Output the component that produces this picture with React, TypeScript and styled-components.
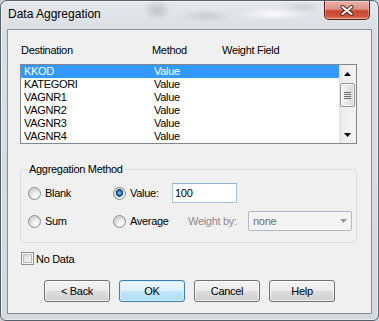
import React from "react";
import styled, { createGlobalStyle, css } from "styled-components";

const GlobalStyle = createGlobalStyle`
  html, body { margin: 0; padding: 0; width: 379px; height: 321px; overflow: hidden; background: #c9ced3; }
  #root { width: 379px; height: 321px; }
  * { box-sizing: border-box; }
`;

const Window = styled.div`
  width: 379px;
  height: 321px;
  border: 1px solid #56606a;
  border-radius: 7px 7px 6px 6px;
  padding: 0 6px 6px;
  display: flex;
  flex-direction: column;
  background:
    radial-gradient(ellipse 20px 15px at 156px 9px, rgba(110, 115, 120, 0.3), transparent 70%),
    radial-gradient(ellipse 38px 9px at 205px 15px, rgba(130, 135, 140, 0.25), transparent 70%),
    radial-gradient(ellipse 50px 9px at 272px 13px, rgba(255, 255, 255, 0.85), transparent 70%),
    radial-gradient(ellipse 28px 9px at 302px 6px, rgba(140, 145, 150, 0.25), transparent 70%),
    linear-gradient(180deg, #e4e8ec 0px, #dadfe4 30px, #d4d9de 100%);
  box-shadow: inset 0 0 0 1px rgba(255, 255, 255, 0.55);
  font-family: "Liberation Sans", Arial, sans-serif;
  overflow: hidden;
`;

const TitleBar = styled.div`
  height: 28px;
  display: flex;
  align-items: flex-start;
  flex-shrink: 0;
`;

const Title = styled.div`
  margin: 6px 0 0 1px;
  font-size: 12px;
  line-height: 15px;
  color: #000;
`;

const CloseButton = styled.div`
  width: 46px;
  height: 19px;
  margin-left: auto;
  margin-right: 2px;
  border: 1px solid #5a1f16;
  border-top: none;
  border-radius: 0 0 5px 5px;
  background: linear-gradient(180deg, #ebb3a7 0%, #dc9283 45%, #c8472f 55%, #cf5539 85%, #e0906f 100%);
  box-shadow: inset 0 0 0 1px rgba(255, 255, 255, 0.3);
  display: flex;
  align-items: center;
  justify-content: center;
`;

const Client = styled.div`
  flex: 1;
  background: #f0f0f0;
  border: 1px solid #858f99;
  padding: 0 12px;
  display: flex;
  flex-direction: column;
  font-size: 11px;
  letter-spacing: -0.3px;
  color: #000;
`;

const HeaderRow = styled.div`
  margin-top: 14px;
  height: 13px;
  line-height: 13px;
  padding-left: 1px;
  display: grid;
  grid-template-columns: 131px 70px 1fr;
`;

const ListBox = styled.div`
  margin-top: 7px;
  width: 337px;
  height: 80px;
  border: 1px solid #828790;
  background: #fff;
  display: flex;
`;

const Rows = styled.div`
  width: 318px;
  display: flex;
  flex-direction: column;
`;

const Row = styled.div<{ $selected?: boolean }>`
  height: 13px;
  line-height: 13px;
  display: grid;
  grid-template-columns: 130px 1fr;
  padding-left: 3px;
  ${(p) =>
    p.$selected &&
    css`
      background: #3399ff;
      color: #fff;
    `}
`;

const ScrollBar = styled.div`
  width: 17px;
  display: flex;
  flex-direction: column;
  background: linear-gradient(90deg, #e3e3e3 0%, #eeeeee 25%, #f3f3f3 100%);
`;

const ArrowButton = styled.div`
  height: 17px;
  display: flex;
  align-items: center;
  justify-content: center;
  flex-shrink: 0;
`;

const Thumb = styled.div`
  margin: 1px 1px 0;
  height: 24px;
  border: 1px solid #979797;
  border-radius: 2px;
  background: linear-gradient(90deg, #f6f6f6 0%, #e8e8e8 50%, #d6d6d6 100%);
  box-shadow: inset 0 0 0 1px rgba(255, 255, 255, 0.8);
  display: flex;
  align-items: center;
  justify-content: center;
`;

const Grip = styled.div`
  width: 7px;
  height: 7px;
  background: repeating-linear-gradient(180deg, #707070 0 1px, transparent 1px 2px);
`;

const Spacer = styled.div`
  flex: 1;
`;

const GroupBox = styled.fieldset`
  margin: 19px 0 0;
  padding: 0;
  width: 337px;
  min-width: 0;
  border: 1px solid #d5dfe5;
  border-radius: 3px;
`;

const Legend = styled.legend`
  margin-left: 6px;
  padding: 0 2px;
  line-height: 13px;
  font-size: 11px;
`;

const GroupBody = styled.div`
  padding: 7px 0 11px 7px;
  display: flex;
  flex-direction: column;
  gap: 8px;
`;

const OptionRow = styled.div`
  display: flex;
  align-items: center;
  height: 20px;
`;

const Radio = styled.label<{ $w: number }>`
  display: flex;
  align-items: center;
  width: ${(p) => p.$w}px;
  height: 20px;
  flex-shrink: 0;
`;

const RadioCircle = styled.span<{ $checked?: boolean }>`
  width: 13px;
  height: 13px;
  border-radius: 50%;
  border: 1px solid #8c8e90;
  margin-right: 4px;
  flex-shrink: 0;
  background: ${(p) =>
    p.$checked
      ? "radial-gradient(circle at 50% 45%, #a8dcfa 0, #3a86c8 1.5px, #1c4f86 3px, #16406f 3.6px, transparent 4px), radial-gradient(circle at 65% 70%, #ffffff 0, #f2f2f2 3px, #d6d6d6 6.5px)"
      : "radial-gradient(circle at 65% 70%, #ffffff 0, #f2f2f2 3px, #d6d6d6 6.5px)"};
`;

const TextInput = styled.input`
  width: 65px;
  height: 20px;
  border: 1px solid #a9c4da;
  border-top-color: #8fb2cd;
  background: #fff;
  padding: 0 2px;
  margin: 0;
  font: inherit;
  letter-spacing: inherit;
  line-height: 18px;
  color: #000;
  outline: none;
`;

const DisabledLabel = styled.span<{ $w: number }>`
  width: ${(p) => p.$w}px;
  color: #8d8d8d;
  flex-shrink: 0;
`;

const Select = styled.div`
  width: 104px;
  height: 20px;
  border: 1px solid #b6babe;
  border-radius: 2px;
  background: #f4f4f4;
  display: flex;
  align-items: center;
  justify-content: space-between;
  padding: 0 4px;
  color: #6d6d6d;
`;

const CheckRow = styled.label`
  margin-top: 9px;
  display: flex;
  align-items: center;
  height: 13px;
`;

const CheckBox = styled.span`
  width: 13px;
  height: 13px;
  margin: 0 2px 0 1px;
  border: 1px solid #8e8f8f;
  background: linear-gradient(135deg, #cfd2d7 0%, #eceef0 60%, #fafafa 100%);
  box-shadow: inset 0 0 0 1px #f6f6f6, inset 0 0 0 2px #b7bcc2;
  flex-shrink: 0;
`;

const ButtonRow = styled.div`
  margin-top: 15px;
  margin-left: 24px;
  display: flex;
  gap: 9px;
`;

const Button = styled.button<{ $default?: boolean }>`
  width: 66px;
  height: 22px;
  padding: 0;
  margin: 0;
  border: 1px solid #707070;
  border-radius: 3px;
  background: linear-gradient(180deg, #f3f3f3 0%, #ececec 50%, #dddddd 50%, #d0d0d0 100%);
  box-shadow: inset 0 0 0 1px rgba(255, 255, 255, 0.75);
  font: inherit;
  letter-spacing: inherit;
  color: #000;
  ${(p) =>
    p.$default &&
    css`
      border-color: #3c7fb1;
      background: linear-gradient(180deg, #ecf7fd 0%, #dcf1fc 50%, #c3e7fb 50%, #afdcf5 100%);
      box-shadow: inset 0 0 0 1px #d4eefc;
    `}
`;

const CloseGlyph = () => (
  <svg width="14" height="11" viewBox="0 0 14 11">
    <path d="M2.5 2 L11.5 9 M11.5 2 L2.5 9" stroke="#4a2019" strokeWidth="4" strokeLinecap="round" fill="none" />
    <path d="M2.5 2 L11.5 9 M11.5 2 L2.5 9" stroke="#ffffff" strokeWidth="2.2" strokeLinecap="round" fill="none" />
  </svg>
);

const ArrowIcon = ({ dir, color = "#000" }: { dir: "up" | "down"; color?: string }) => (
  <svg width="7" height="4" viewBox="0 0 7 4">
    <polygon points={dir === "up" ? "3.5,0 7,4 0,4" : "0,0 7,0 3.5,4"} fill={color} />
  </svg>
);

const items = ["KKOD", "KATEGORI", "VAGNR1", "VAGNR2", "VAGNR3", "VAGNR4"];

export default function App() {
  return (
    <>
      <GlobalStyle />
      <Window>
        <TitleBar>
          <Title>Data Aggregation</Title>
          <CloseButton>
            <CloseGlyph />
          </CloseButton>
        </TitleBar>
        <Client>
          <HeaderRow>
            <span>Destination</span>
            <span>Method</span>
            <span>Weight Field</span>
          </HeaderRow>
          <ListBox>
            <Rows>
              {items.map((name, i) => (
                <Row key={name} $selected={i === 0}>
                  <span>{name}</span>
                  <span>Value</span>
                </Row>
              ))}
            </Rows>
            <ScrollBar>
              <ArrowButton>
                <ArrowIcon dir="up" />
              </ArrowButton>
              <Thumb>
                <Grip />
              </Thumb>
              <Spacer />
              <ArrowButton>
                <ArrowIcon dir="down" />
              </ArrowButton>
            </ScrollBar>
          </ListBox>
          <GroupBox>
            <Legend>Aggregation Method</Legend>
            <GroupBody>
              <OptionRow>
                <Radio $w={85}>
                  <RadioCircle />
                  Blank
                </Radio>
                <Radio $w={59}>
                  <RadioCircle $checked />
                  Value:
                </Radio>
                <TextInput defaultValue="100" readOnly />
              </OptionRow>
              <OptionRow>
                <Radio $w={85}>
                  <RadioCircle />
                  Sum
                </Radio>
                <Radio $w={75}>
                  <RadioCircle />
                  Average
                </Radio>
                <DisabledLabel $w={60}>Weight by:</DisabledLabel>
                <Select>
                  <span>none</span>
                  <ArrowIcon dir="down" color="#9a9a9a" />
                </Select>
              </OptionRow>
            </GroupBody>
          </GroupBox>
          <CheckRow>
            <CheckBox />
            No Data
          </CheckRow>
          <ButtonRow>
            <Button>&lt; Back</Button>
            <Button $default>OK</Button>
            <Button>Cancel</Button>
            <Button>Help</Button>
          </ButtonRow>
        </Client>
      </Window>
    </>
  );
}
